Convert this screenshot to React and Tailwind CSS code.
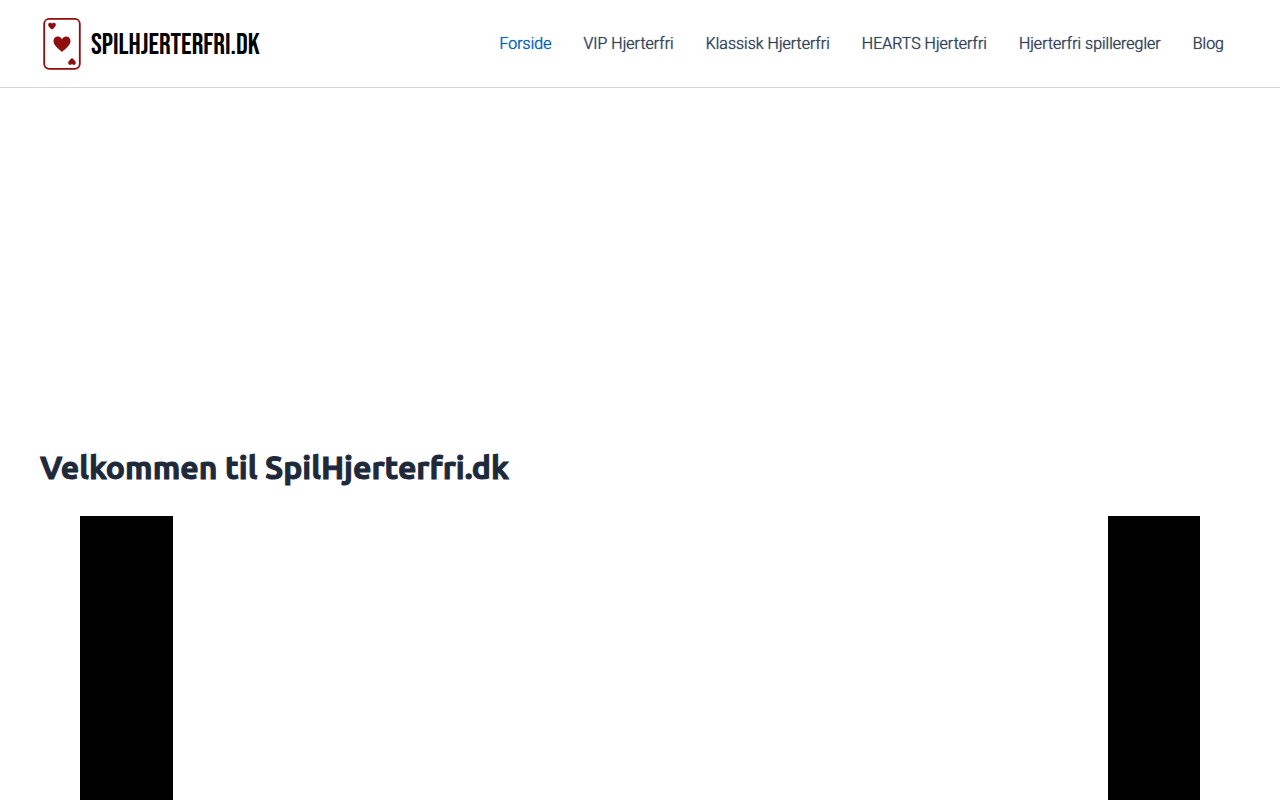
const navItems = [
  { label: 'Forside', href: '#', active: true },
  { label: 'VIP Hjerterfri', href: '#vip' },
  { label: 'Klassisk Hjerterfri', href: '#klassisk' },
  { label: 'HEARTS Hjerterfri', href: '#hearts' },
  { label: 'Hjerterfri spilleregler', href: '#regler' },
  { label: 'Blog', href: '#blog' },
];

const HEART = 'M0 8C-3 5-8.5 1.5-8.5-3C-8.5-6-6.5-7.5-4.3-7.5C-2.2-7.5-.7-6.3 0-4.8C.7-6.3 2.2-7.5 4.3-7.5C6.5-7.5 8.5-6 8.5-3C8.5 1.5 3 5 0 8Z';

function CardIcon() {
  return (
    <svg width="38" height="53" viewBox="0 0 38 53" aria-hidden="true">
      <rect x="1.2" y="1.8" width="35.6" height="50" rx="5" fill="#fff" stroke="#8f0d0d" strokeWidth="1.8" />
      <g fill="#8f0d0d">
        <path d={HEART} transform="translate(9 9) scale(.45)" />
        <path d={HEART} transform="translate(19 27)" />
        <path d={HEART} transform="translate(29 44.5) rotate(180) scale(.45)" />
      </g>
    </svg>
  );
}

function Header() {
  return (
    <header className="border-b border-[#d1d5db] bg-white">
      <div className="max-w-[1240px] mx-auto px-5 py-4 flex items-center justify-between">
        <a href="#" className="flex items-center gap-2.5 pl-[3px] py-px">
          <CardIcon />
          <span className="pt-1 font-['Bebas_Neue',sans-serif] text-[29px] leading-[48px] text-black whitespace-nowrap">
            SPILHJERTERFRI.DK
          </span>
        </a>
        <nav className="flex">
          {navItems.map((item) => (
            <a
              key={item.href}
              href={item.href}
              className={`px-4 text-base font-light whitespace-nowrap [text-shadow:0_0_1px_currentColor] ${item.active ? 'text-[#045cb4]' : 'text-[#334155]'}`}
            >
              {item.label}
            </a>
          ))}
        </nav>
      </div>
    </header>
  );
}

export default function App() {
  return (
    <div className="min-h-screen bg-white font-[Roboto,sans-serif]">
      <Header />
      <main className="max-w-[1240px] mx-auto px-5">
        {/* Ad slot */}
        <div className="h-[357px]" />
        <h1 className="font-[Ubuntu,'Noto_Sans',sans-serif] font-bold text-[32px] leading-[44px] text-[#1e293b] [-webkit-text-stroke:1px_#1e293b]">
          Velkommen til SpilHjerterfri.dk
        </h1>
        {/* Game frame */}
        <div className="mx-10 mt-[27px] flex justify-center bg-black">
          <div className="w-[935px] h-[630px] bg-white" />
        </div>
      </main>
    </div>
  );
}
